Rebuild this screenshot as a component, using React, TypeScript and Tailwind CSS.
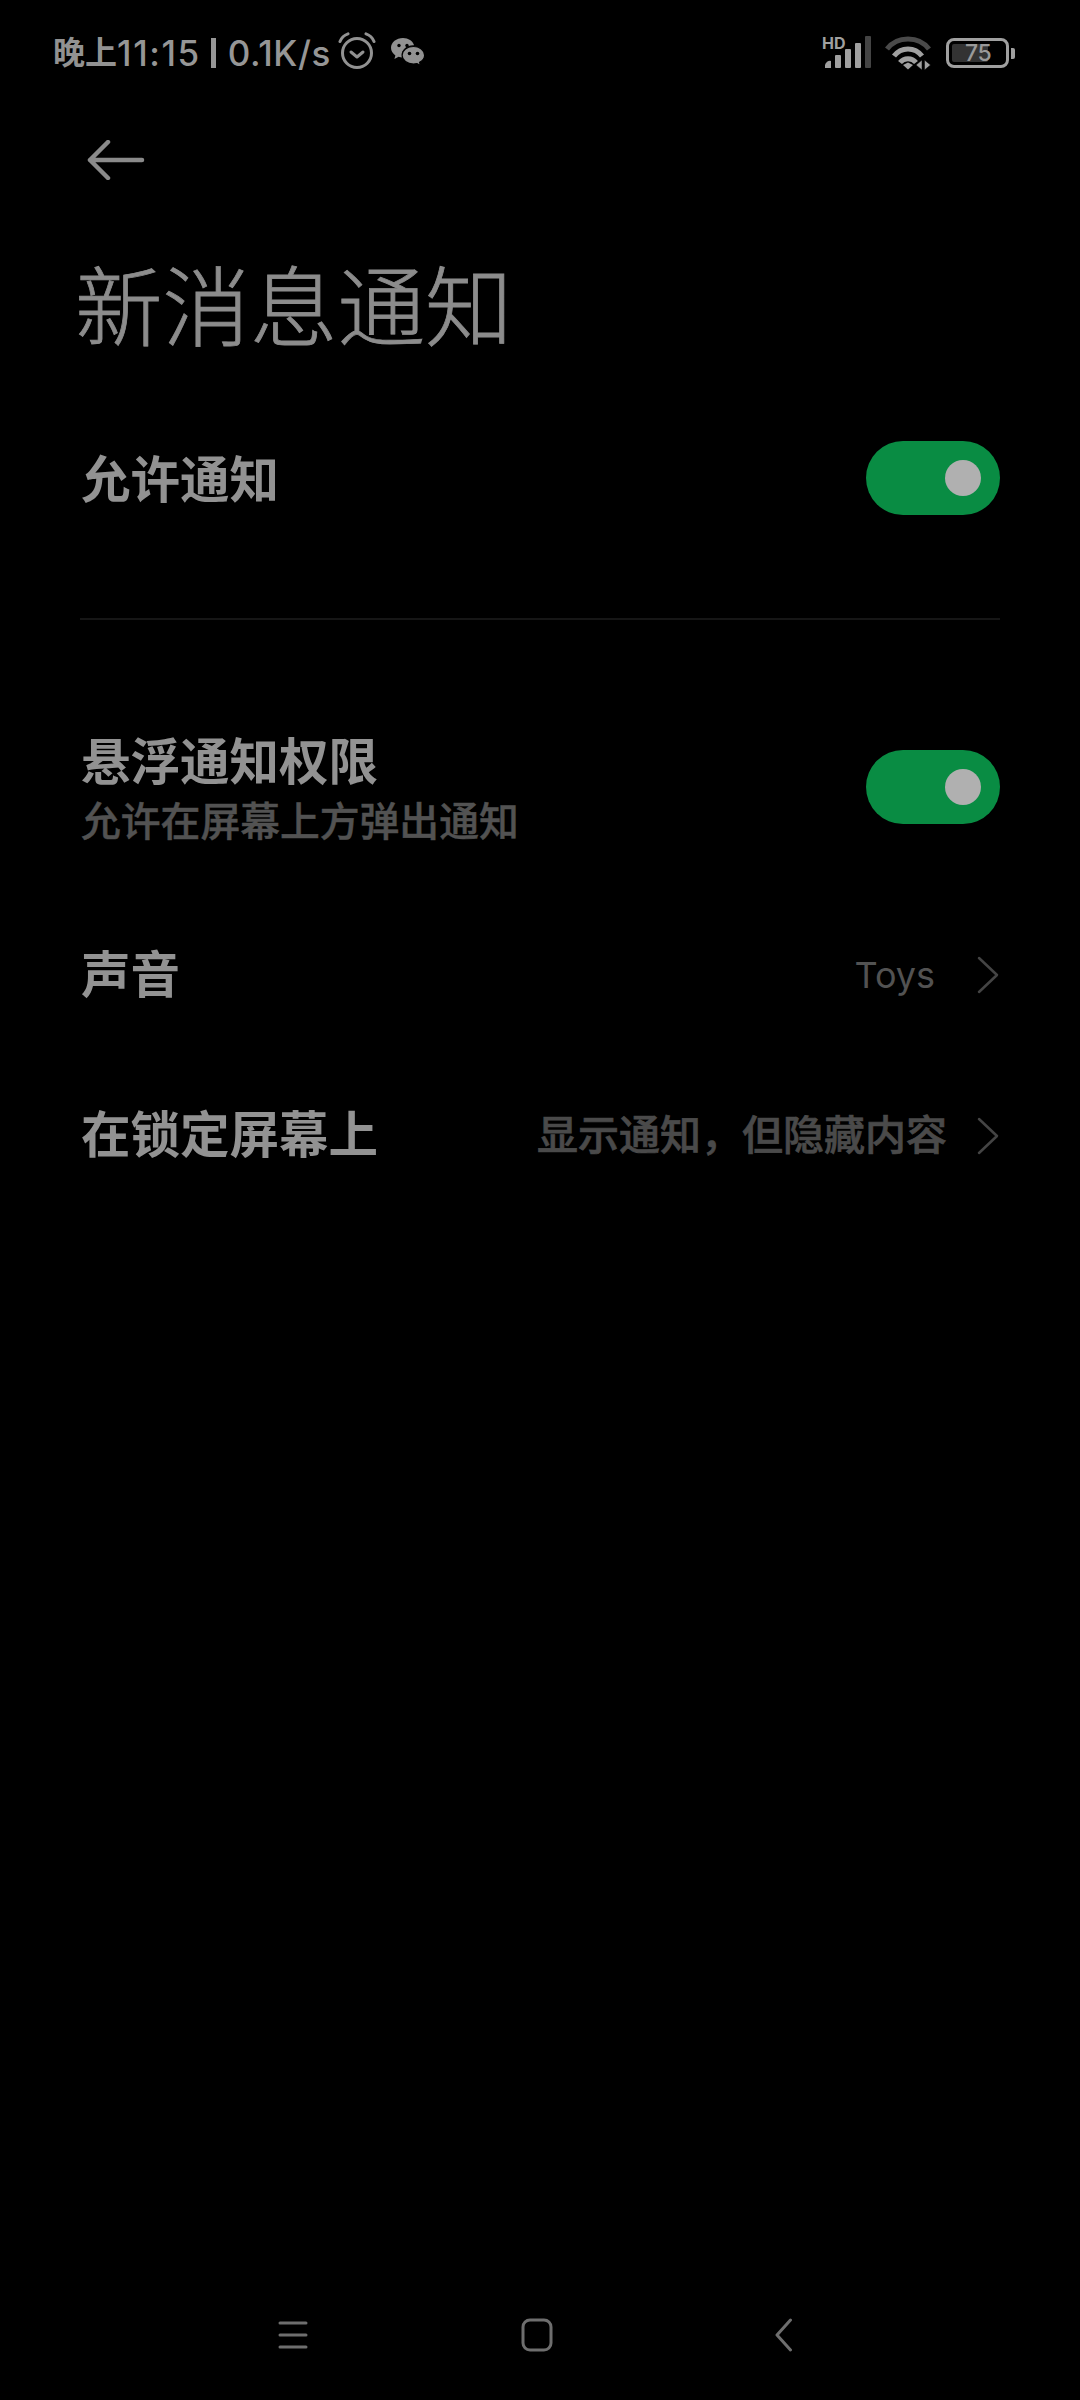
const cjk = "font-['Inter','Noto_Sans_CJK_SC',sans-serif]";

function AlarmIcon() {
  return (
    <svg width="38" height="38" viewBox="0 0 38 38" fill="none" stroke="#929292" strokeLinecap="round">
      <circle cx="19" cy="21" r="14.5" strokeWidth="3" />
      <path d="M13 20l6 5 6-5" strokeWidth="3" strokeLinejoin="round" />
      <path d="M2 9.500C3.500 5.500 6.500 3 10 1.800M36 9.500C34.500 5.500 31.500 3 28 1.800" strokeWidth="3" />
    </svg>
  );
}

function WechatIcon() {
  return (
    <svg width="34" height="30" viewBox="0 0 34 30" fill="#929292">
      <path d="M12 0C5.4 0 0 4.4 0 9.8c0 3.1 1.7 5.8 4.4 7.6L3.4 21l4.2-2.2c1.2.4 2.5.6 3.8.7-.3-1-.5-1.900-.5-2.900 0-5.200 5-9.400 11.200-9.400h1C21.800 3.100 17.300 0 12 0z" />
      <path d="M22.500 8.500c-6.300 0-11.400 3.900-11.400 8.800s5.100 8.800 11.400 8.800c1.200 0 2.400-.2 3.500-.5l3.500 2-.9-3.200c3-1.600 5-4.100 5-7.100 0-4.900-5-8.800-11.100-8.800z" stroke="#000" strokeWidth="1.200" />
      <circle cx="8" cy="7.500" r="1.700" fill="#000" />
      <circle cx="16" cy="7.500" r="1.700" fill="#000" />
      <circle cx="18.500" cy="15.500" r="1.800" fill="#000" />
      <circle cx="26.500" cy="15.500" r="1.800" fill="#000" />
    </svg>
  );
}

function SignalIcon() {
  return (
    <div className="flex flex-col w-[50px] h-[34px] leading-none">
      <span className="font-['Inter',sans-serif] font-bold text-[16px] leading-[14px] text-[#a0a0a0] -mb-[14px]">HD</span>
      <svg width="50" height="34" viewBox="0 0 50 34">
        <path d="M3 32v-3a5 5 0 0 1 6-4v7z" fill="#a0a0a0" />
        <rect x="13" y="19" width="6" height="13" rx="1" fill="#a0a0a0" />
        <rect x="23" y="13" width="6" height="19" rx="1" fill="#a0a0a0" />
        <rect x="33" y="7" width="6" height="25" rx="1" fill="#a0a0a0" />
        <rect x="43" y="0" width="6" height="32" rx="1" fill="#444444" />
      </svg>
    </div>
  );
}

function WifiIcon() {
  return (
    <svg width="46" height="34" viewBox="0 0 46 34" fill="none" strokeLinecap="butt">
      <path d="M2 13C12 -0.500 34 -0.500 44 13" stroke="#4a4a4a" strokeWidth="5" />
      <path d="M9 20C16 10.500 30 10.500 37 20" stroke="#a0a0a0" strokeWidth="5" />
      <path d="M15 26.500C19 21.500 27 21.500 31 26.500" stroke="#a0a0a0" strokeWidth="5" />
      <path d="M18 29l5-2.500 5 2.500-5 4.500z" fill="#a0a0a0" />
      <path d="M37 24v10l-6-5zM39.500 24v10l6-5z" fill="#a0a0a0" stroke="#000" strokeWidth="0.500" />
    </svg>
  );
}

function BatteryIcon() {
  return (
    <div className="flex items-center gap-[2px]">
      <div className="w-[63px] h-[30px] border-[3px] border-[#a0a0a0] rounded-[8px] p-[3px] flex">
        <div className="w-[36px] h-full bg-[#333333] rounded-[2px] flex items-center">
          <span className="font-['Inter',sans-serif] font-medium text-[23px] leading-none tracking-[-0.5px] text-[#999999] ml-[13px]">75</span>
        </div>
      </div>
      <div className="w-[4px] h-[11px] bg-[#a0a0a0] rounded-r-[2px]" />
    </div>
  );
}

function Toggle() {
  return (
    <div className="w-[134px] h-[74px] rounded-full bg-[#098c43] flex items-center justify-end pr-[19px] shrink-0">
      <div className="w-[36px] h-[36px] rounded-full bg-[#b0b0b0]" />
    </div>
  );
}

function Chevron() {
  return (
    <svg width="22" height="38" viewBox="0 0 22 38" fill="none" stroke="#444444" strokeWidth="2.500" strokeLinecap="round" strokeLinejoin="round">
      <path d="M2 2l18 17L2 36" />
    </svg>
  );
}

export default function App() {
  return (
    <div className={`w-[1080px] h-[2400px] bg-black flex flex-col ${cjk}`}>
      {/* status bar */}
      <div className="h-[104px] shrink-0 flex items-center justify-between pt-[2px] pl-[53px] pr-[65px]">
        <div className="flex items-center">
          <span className="text-[32px] font-bold text-[#929292] whitespace-nowrap">晚上</span>
          <span className="text-[35px] font-medium tracking-[1.6px] text-[#969696] whitespace-nowrap">11:15</span>
          <span className="ml-[10px] w-[5px] h-[30px] bg-[#969696]" />
          <span className="ml-[12px] text-[35px] font-medium tracking-[0.6px] text-[#969696] whitespace-nowrap">0.1K/s</span>
          <span className="ml-[7px] -mt-[4px]"><AlarmIcon /></span>
          <span className="ml-[15px]"><WechatIcon /></span>
        </div>
        <div className="flex items-center">
          <SignalIcon />
          <span className="ml-[13px]"><WifiIcon /></span>
          <span className="ml-[15px]"><BatteryIcon /></span>
        </div>
      </div>

      {/* back */}
      <div className="h-[112px] shrink-0 flex items-center pl-[87px]">
        <svg width="58" height="40" viewBox="0 0 58 40" fill="none" stroke="#8a8a8a" strokeWidth="4.500" strokeLinecap="round" strokeLinejoin="round">
          <path d="M3 20h52M21 2L3 20l18 18" />
        </svg>
      </div>

      <div className="h-[186px] shrink-0 flex items-center pl-[75px] text-[87.500px] font-light leading-none text-[#8c8c8c] [-webkit-text-stroke:0.8px_#8c8c8c]">新消息通知</div>

      <div className="px-[80px] flex flex-col">
        <div className="h-[152px] flex items-center justify-between">
          <span className="mt-[5px] pl-[1px] text-[49.500px] font-bold leading-none text-[#929292]">允许通知</span>
          <Toggle />
        </div>
        <div className="mt-[64px] h-[2px] bg-[#161616]" />

        <div className="mt-[102px] h-[130px] flex items-center justify-between">
          <div className="mt-[10px] pl-[1px] flex flex-col">
            <span className="text-[49.500px] font-bold leading-[60px] text-[#929292]">悬浮通知权限</span>
            <span className="text-[39.800px] leading-[60px] font-medium text-[#525252] [-webkit-text-stroke:0.5px_#525252]">允许在屏幕上方弹出通知</span>
          </div>
          <Toggle />
        </div>

        <div className="mt-[83px] h-[80px] flex items-center justify-between">
          <span className="mt-[2px] pl-[1px] text-[49.500px] font-bold leading-none text-[#929292]">声音</span>
          <div className="flex items-center">
            <span className="text-[36px] font-normal font-['Inter',sans-serif] text-[#525252]">Toys</span>
            <span className="ml-[42px] mr-[1px]"><Chevron /></span>
          </div>
        </div>

        <div className="mt-[81px] h-[80px] flex items-center justify-between">
          <span className="pl-[1px] text-[49.500px] font-bold leading-none text-[#929292]">在锁定屏幕上</span>
          <div className="flex items-center">
            <span className="text-[41px] font-medium text-[#4a4a4a] whitespace-nowrap [-webkit-text-stroke:0.7px_#4a4a4a]">显示通知，但隐藏内容</span>
            <span className="ml-[30px] mr-[1px]"><Chevron /></span>
          </div>
        </div>
      </div>

      {/* nav bar */}
      <div className="mt-auto mb-[48px] h-[34px] flex items-center pl-[278px]">
        <svg width="30" height="30" viewBox="0 0 30 30" fill="none" stroke="#6e6e6e" strokeWidth="3" strokeLinecap="round">
          <path d="M2 3h26M2 15h26M2 27h26" />
        </svg>
        <svg className="ml-[213px]" width="32" height="34" viewBox="0 0 32 34" fill="none" stroke="#6e6e6e" strokeWidth="3">
          <rect x="2" y="2" width="28" height="30" rx="7" />
        </svg>
        <svg className="ml-[222px]" width="18" height="34" viewBox="0 0 18 34" fill="none" stroke="#6e6e6e" strokeWidth="3" strokeLinecap="round" strokeLinejoin="round">
          <path d="M15.500 2L2 17l13.500 15" />
        </svg>
      </div>
    </div>
  );
}
